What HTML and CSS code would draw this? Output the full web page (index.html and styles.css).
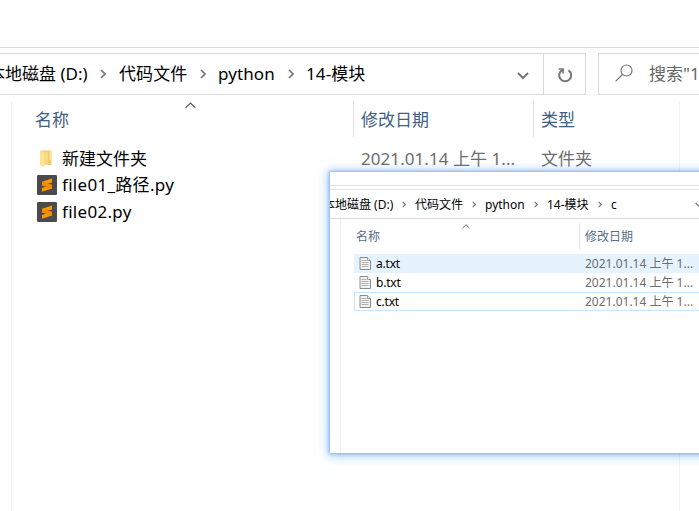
FILE: index.html
```html
<!DOCTYPE html>
<html lang="zh-CN">
<head>
<meta charset="utf-8">
<title>14-模块</title>
<link rel="stylesheet" href="styles.css">
</head>
<body>
<svg class="defs" width="0" height="0">
  <symbol id="chev" viewBox="0 0 6 10"><path d="M1 1l4 4-4 4" fill="none" stroke="#777" stroke-width="1.7"/></symbol>
  <symbol id="down" viewBox="0 0 12 8"><path d="M1 1l5 5 5-5" fill="none" stroke="#777" stroke-width="2"/></symbol>
  <symbol id="up" viewBox="0 0 10 6"><path d="M.5 5.2L5 .8l4.500 4.400" fill="none" stroke="#555" stroke-width="1.100"/></symbol>
  <symbol id="subl" viewBox="0 0 20 20">
    <rect width="20" height="20" rx="1.200" fill="#4b4b4b"/>
    <path d="M15 3.500L5 6.700v3.900l10-3.200z" fill="#ff9800"/>
    <path d="M5 12.900v3.900l10-3.200V9.700z" fill="#ff9800"/>
    <path d="M5 6.800v3.800l10 3.100V9.800z" fill="#f48b00"/>
  </symbol>
  <symbol id="txt" viewBox="0 0 12 13">
    <path d="M1 .5h7.500l3 3v9H1z" fill="#f1f1f1" stroke="#8c8c8c"/>
    <path d="M8.500.5v3h3" fill="#fff" stroke="#8c8c8c" stroke-width=".8"/>
    <path d="M2.500 3.500h5M2.500 5.500h7M2.500 7.500h7M2.500 9.500h7" stroke="#a5a5a5" stroke-width=".8"/>
  </symbol>
</svg>
<main class="explorer">
  <div class="ribbon"></div>
  <div class="toolbar">
    <div class="address">
      <div class="crumbs">
        <span class="disk">本地磁盘 (D:)</span><svg class="sep"><use href="#chev"/></svg>
        <span class="code">代码文件</span><svg class="sep"><use href="#chev"/></svg>
        <span class="py">python</span><svg class="sep"><use href="#chev"/></svg>
        <span>14-模块</span>
      </div>
      <svg class="drop"><use href="#down"/></svg>
      <div class="refresh">
        <svg width="16" height="16" viewBox="0 0 16 16" fill="none" stroke="#777" stroke-width="2"><path d="M11.500 3.300A6 6 0 1 1 5.300 3"/><path d="M1.600 2h4.500v4.600" stroke-width="1.700"/></svg>
      </div>
    </div>
    <div class="search">
      <svg width="18" height="18" viewBox="0 0 18 18" fill="none" stroke="#777" stroke-width="1.200"><circle cx="11.500" cy="6.500" r="5.500"/><path d="M7.500 10.500L.6 17.400"/></svg>
      <span>搜索"14-模块"</span>
    </div>
  </div>
  <div class="pane">
    <div class="head">
      <span class="c-name">名称<svg class="sort"><use href="#up"/></svg></span>
      <span class="c-date">修改日期</span>
      <span class="c-type">类型</span>
    </div>
    <div class="list">
      <div class="row">
        <svg class="ico" viewBox="0 0 20 20"><path d="M4 1.500h10.500V16H4z" fill="#f2cc68"/><path d="M12.500 1.500h2V11h-2z" fill="#fbe49c"/><path d="M3 1.500l4 1.700V18l-4-1.700z" fill="#ffe394"/><path d="M7 3.200h4V16H7z" fill="#f8da82"/></svg>
        <span class="fname">新建文件夹</span><span class="date">2021.01.14 上午 1...</span><span class="type">文件夹</span>
      </div>
      <div class="row"><svg class="ico"><use href="#subl"/></svg><span class="fname latin">file01_路径.py</span></div>
      <div class="row"><svg class="ico"><use href="#subl"/></svg><span class="fname latin">file02.py</span></div>
    </div>
  </div>
</main>
<section class="popup">
  <div class="inner">
    <div class="p-ribbon"></div>
    <div class="p-address">
      <div class="p-crumbs">
        <span class="disk">本地磁盘 (D:)</span><svg class="sep"><use href="#chev"/></svg>
        <span class="code">代码文件</span><svg class="sep"><use href="#chev"/></svg>
        <span class="py">python</span><svg class="sep"><use href="#chev"/></svg>
        <span class="mod">14-模块</span><svg class="sep"><use href="#chev"/></svg>
        <span>c</span>
      </div>
      <svg class="p-drop"><use href="#down"/></svg>
    </div>
    <div class="p-pane">
      <div class="p-head">
        <span class="c-name">名称<svg class="sort"><use href="#up"/></svg></span>
        <span class="c-date">修改日期</span>
      </div>
      <div class="p-list">
        <div class="p-row hover"><svg class="doc"><use href="#txt"/></svg><span class="fname">a.txt</span><span class="date">2021.01.14 上午 1...</span></div>
        <div class="p-row"><svg class="doc"><use href="#txt"/></svg><span class="fname">b.txt</span><span class="date">2021.01.14 上午 1...</span></div>
        <div class="p-row focus"><svg class="doc"><use href="#txt"/></svg><span class="fname">c.txt</span><span class="date">2021.01.14 上午 1...</span></div>
      </div>
    </div>
  </div>
</section>
</body>
</html>
```
FILE: styles.css
```css
* { box-sizing: border-box; }
body {
  margin: 0;
  width: 699px;
  height: 511px;
  overflow: hidden;
  position: relative;
  background: #fff;
  color: #000;
  font: 17px/26px "Noto Sans", "Noto Sans CJK SC", sans-serif;
  white-space: nowrap;
}
.defs { position: absolute; }
svg { flex: none; }
.explorer { display: flex; flex-direction: column; height: 511px; width: 699px; overflow: hidden; }
.ribbon { height: 48px; border-bottom: 1px solid #dadada; flex: none; }
.toolbar { display: flex; gap: 12px; margin-top: 5px; height: 42px; flex: none; }
.address { display: flex; width: 586px; flex: none; align-items: center; border: 1px solid #d9d9d9; border-left: 0; height: 42px; }
.crumbs { display: flex; align-items: center; width: 517px; overflow: hidden; letter-spacing: .1px; }
.crumbs span { flex: none; }
.crumbs .disk { width: 112px; margin-left: -12px; letter-spacing: 0; }
.crumbs .code { width: 82px; padding-left: 1px; }
.crumbs .py { width: 70px; }
.crumbs .sep { width: 6px; height: 10px; margin-right: 12px; }
.drop { width: 12px; height: 8px; margin-top: 3px; }
.refresh { margin-left: 14px; border-left: 1px solid #d9d9d9; height: 40px; width: 42px; display: flex; align-items: center; justify-content: center; padding-top: 2px; }
.search { display: flex; align-items: center; gap: 16px; width: 180px; flex: none; border: 1px solid #d9d9d9; padding-left: 16px; color: #666; }
.search svg { margin-top: -2px; }
.pane { flex: 1; margin: 6px 19px 0 11px; border-left: 1px solid #f3f3f3; border-right: 1px solid #f3f3f3; }
.head { display: flex; height: 36px; color: #44607f; line-height: 37px; }
.head .c-name { width: 342px; padding-left: 23px; border-right: 1px solid #e2e2e2; position: relative; }
.head .sort { position: absolute; left: 173px; top: 1px; width: 11px; height: 7px; }
.head .c-date { width: 180px; padding-left: 7px; border-right: 1px solid #e2e2e2; }
.head .c-type { padding-left: 7px; }
.list { padding-top: 8px; }
.row { display: flex; align-items: center; height: 27px; padding-left: 25px; }
.row + .row { position: relative; top: -1px; }
.ico { width: 20px; height: 20px; margin-right: 5px; }
.row .fname { width: 299px; }
.row .latin { letter-spacing: .3px; }
.row .date { width: 180px; color: #6d6d6d; letter-spacing: .06px; }
.row .type { color: #6d6d6d; }

.popup {
  position: absolute;
  left: 330px;
  top: 172px;
  width: 390px;
  height: 281px;
  background: #fff;
  box-shadow: 0 0 3px 1px rgba(90, 155, 235, .65), 0 1px 10px 2px rgba(90, 165, 250, .55);
  font-size: 12px;
  line-height: 18px;
}
.inner { width: 369px; height: 281px; overflow: hidden; display: flex; flex-direction: column; }
.p-ribbon { height: 14px; border-bottom: 1px solid #e2e2e2; flex: none; }
.p-address { display: flex; align-items: center; margin-top: 3px; height: 30px; border-top: 1px solid #e2e2e2; border-bottom: 1px solid #dadada; flex: none; }
.p-crumbs { display: flex; align-items: center; width: 365px; overflow: hidden; flex: none; padding-top: 1px; }
.p-crumbs span { flex: none; }
.p-crumbs .disk { width: 79px; margin-left: -7px; }
.p-crumbs .code { width: 57px; }
.p-crumbs .py { width: 49px; }
.p-crumbs .mod { width: 51px; }
.p-crumbs .sep { width: 4px; height: 7px; margin-right: 9px; }
.p-drop { width: 8px; height: 6px; margin-top: 2px; }
.p-pane { flex: 1; margin-left: 10px; border-left: 1px solid #f3f3f3; padding-top: 4px; }
.p-head { display: flex; height: 26px; line-height: 27px; color: #5a6d86; }
.p-head .c-name { width: 239px; padding-left: 15px; border-right: 1px solid #e5e5e5; position: relative; }
.p-head .sort { position: absolute; left: 121px; top: 1px; width: 8px; height: 5px; }
.p-head .c-date { padding-left: 5px; }
.p-list { padding: 5px 0 0 13px; }
.p-row { display: flex; align-items: center; height: 19px; padding-left: 5px; border: 1px solid transparent; border-width: 1px 0; }
.p-row.hover { background: #e5f3ff; }
.p-row.focus { border: 1px solid #c6e5fb; border-right: 0; padding-left: 4px; }
.doc { width: 12px; height: 13px; margin-right: 5px; }
.p-row .fname { width: 209px; letter-spacing: -.2px; }
.p-row .date { color: #6d6d6d; }
```
